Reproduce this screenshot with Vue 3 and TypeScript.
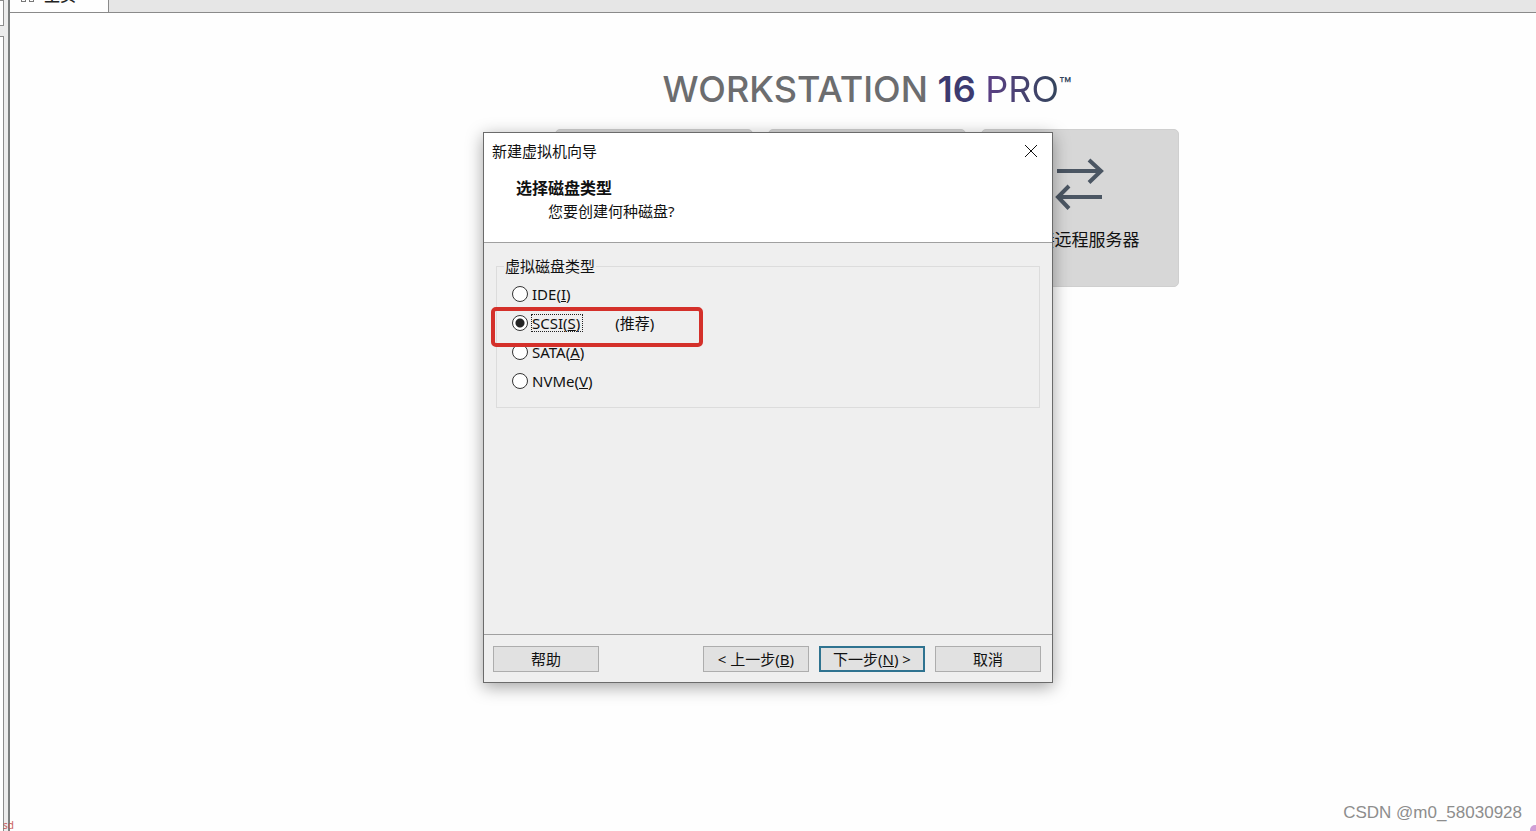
<script setup lang="ts">
import { ref } from 'vue'

interface DiskType {
  value: string
  label: string
  accessKey: string
  note?: string
}

const diskTypes: DiskType[] = [
  { value: 'ide', label: 'IDE', accessKey: 'I' },
  { value: 'scsi', label: 'SCSI', accessKey: 'S', note: '(推荐)' },
  { value: 'sata', label: 'SATA', accessKey: 'A' },
  { value: 'nvme', label: 'NVMe', accessKey: 'V' },
]

const selected = ref('scsi')
</script>

<template>
  <div class="app">
    <aside class="sidebar">
      <div class="search-pane"></div>
      <div class="tree-pane"></div>
      <span class="side-mark">sd</span>
    </aside>

    <main class="workspace">
      <nav class="tabs">
        <a class="tab" href="#home">
          <svg width="16" height="14" viewBox="0 0 16 14" fill="none" stroke="#777" aria-hidden="true">
            <rect x="1.5" y="0.5" width="4" height="4" />
            <rect x="9.5" y="0.5" width="4" height="4" />
            <rect x="1.5" y="8.5" width="4" height="4" />
            <rect x="9.5" y="8.5" width="4" height="4" />
          </svg>
          <span>主页</span>
        </a>
      </nav>

      <section class="home">
        <h1 class="brand">WORKSTATION <b>16</b> <span class="pro">PRO</span><span class="tm">™</span></h1>
        <div class="cards">
          <div class="card"></div>
          <div class="card"></div>
          <button class="card" type="button">
            <svg width="50" height="52" viewBox="0 0 50 52" fill="none" stroke="#4b5663" stroke-width="4" aria-hidden="true">
              <path d="M2 13H46M34 2L46 13L34 24.500" />
              <path d="M47 39H3M14 28L3 39L14 50.500" />
            </svg>
            <span>连接远程服务器</span>
          </button>
        </div>
      </section>
    </main>

    <div class="dialog" role="dialog" aria-labelledby="wizard-title">
      <header class="head">
        <div class="titlebar">
          <span id="wizard-title">新建虚拟机向导</span>
          <button class="close" type="button" aria-label="关闭">
            <svg width="14" height="14" viewBox="0 0 14 14" stroke="#111" aria-hidden="true">
              <path d="M1 1L13 13M13 1L1 13" />
            </svg>
          </button>
        </div>
        <h2>选择磁盘类型</h2>
        <p>您要创建何种磁盘?</p>
      </header>

      <div class="body">
        <fieldset>
          <legend>虚拟磁盘类型</legend>
          <label v-for="disk in diskTypes" :key="disk.value" class="option">
            <input v-model="selected" type="radio" name="disk" :value="disk.value" />
            <span class="name" :class="{ focused: disk.value === selected }">{{ disk.label }}(<u>{{ disk.accessKey }}</u>)</span>
            <span v-if="disk.note" class="note">{{ disk.note }}</span>
          </label>
          <div class="marker"></div>
        </fieldset>
      </div>

      <footer class="foot">
        <button type="button" class="btn help">帮助</button>
        <button type="button" class="btn">&lt; 上一步(<u>B</u>)</button>
        <button type="button" class="btn primary">下一步(<u>N</u>) &gt;</button>
        <button type="button" class="btn">取消</button>
      </footer>
    </div>

    <div class="watermark">CSDN @m0_58030928</div>
    <div class="corner"></div>
  </div>
</template>

<style>
body {
  margin: 0;
}
</style>

<style scoped>
.app {
  position: relative;
  display: flex;
  min-height: 100vh;
  overflow: hidden;
  background: #fefefe;
  color: #111;
  font: 15px/20px "Noto Sans", "Noto Sans CJK SC", sans-serif;
}

button {
  font: inherit;
  color: inherit;
}

.sidebar {
  position: relative;
  box-sizing: border-box;
  display: flex;
  flex-direction: column;
  gap: 10px;
  width: 10px;
  padding: 0 4px 0 0;
  border-right: 2px solid #7c7f7f;
  background: #ececec;
}

.search-pane,
.tree-pane {
  border: 1px solid #8c8c8c;
  border-left: 0;
  background: #fff;
}

.search-pane {
  height: 24px;
}

.tree-pane {
  flex: 1;
  border-bottom: 0;
}

.side-mark {
  position: absolute;
  left: 3px;
  bottom: 0;
  color: #c9605c;
  font-size: 10px;
  line-height: 12px;
}

.workspace {
  flex: 1;
  display: flex;
  flex-direction: column;
}

.tabs {
  display: flex;
  height: 12px;
  border-bottom: 1px solid #8a8a8a;
  background: #e6e6e6;
}

.tab {
  box-sizing: border-box;
  display: flex;
  align-items: flex-end;
  gap: 8px;
  width: 99px;
  height: 12px;
  padding: 0 0 9px 10px;
  overflow: hidden;
  border-right: 1px solid #8a8a8a;
  background: #fefefe;
  color: #222;
  text-decoration: none;
}

.tab svg,
.tab span {
  flex: none;
}

.tab span {
  font-size: 16px;
  font-weight: 500;
  line-height: 16px;
}

.home {
  display: flex;
  flex-direction: column;
  align-items: center;
  padding: 54px 0 0 188px;
}

.brand {
  margin: 0;
  color: #6c6d6f;
  font: 500 36px/44px Inter, sans-serif;
  white-space: nowrap;
}

.brand b {
  color: #3c3a70;
  font-weight: 600;
}

.pro {
  background: linear-gradient(90deg, #5c3f85, #33455c);
  background-clip: text;
  color: transparent;
  font-weight: 400;
}

.tm {
  color: #33455c;
  font-size: 20px;
  line-height: 20px;
  vertical-align: 10px;
}

.cards {
  display: flex;
  gap: 15px;
  margin-top: 18px;
}

.card {
  box-sizing: border-box;
  display: flex;
  flex-direction: column;
  align-items: center;
  gap: 18px;
  width: 198px;
  height: 158px;
  padding: 28px 0 0;
  border: 1px solid #cfcfcf;
  border-radius: 5px;
  background: #d7d7d7;
  font-size: 17px;
  line-height: 24px;
}

.dialog {
  position: absolute;
  top: 132px;
  left: 50%;
  box-sizing: border-box;
  display: flex;
  flex-direction: column;
  width: 570px;
  border: 1px solid #6b6b6b;
  background: #efefef;
  box-shadow: 0 4px 16px rgba(0, 0, 0, 0.36);
  transform: translateX(-50%);
}

.head {
  box-sizing: border-box;
  height: 110px;
  border-bottom: 1px solid #a0a0a0;
  background: #fff;
}

.titlebar {
  display: flex;
  align-items: center;
  justify-content: space-between;
  height: 36px;
  padding: 0 14px 0 8px;
}

.close {
  display: flex;
  padding: 0;
  border: 0;
  background: none;
}

.head h2 {
  margin: 9px 0 0 32px;
  font-size: 16px;
  line-height: 20px;
}

.head p {
  margin: 3px 0 0 64px;
}

.body {
  height: 391px;
  padding: 13px 12px 0;
  box-sizing: border-box;
}

fieldset {
  position: relative;
  margin: 0;
  padding: 3px 15px 12px;
  border: 1px solid #dcdcdc;
}

legend {
  margin-left: -8px;
  padding: 0 1px;
}

.option {
  display: flex;
  align-items: center;
  height: 29px;
}

input {
  appearance: none;
  box-sizing: border-box;
  width: 16px;
  height: 16px;
  margin: 0 3px 0 0;
  border: 1px solid #333;
  border-radius: 50%;
  background: #fff;
}

input:checked {
  background: radial-gradient(circle, #222 0 4px, #fff 5px);
}

.name {
  padding: 0 1px;
  line-height: 18px;
}

.focused {
  padding-right: 3px;
  outline: 1px dotted #222;
  outline-offset: -1px;
}

.note {
  margin-left: 32px;
}

.marker {
  position: absolute;
  top: 31px;
  left: -6px;
  box-sizing: border-box;
  width: 212px;
  height: 40px;
  border: 4px solid #d4302a;
  border-radius: 5px;
  pointer-events: none;
}

.foot {
  display: flex;
  gap: 10px;
  padding: 11px 11px 10px 9px;
  border-top: 1px solid #a0a0a0;
}

.btn {
  box-sizing: border-box;
  width: 106px;
  height: 26px;
  padding: 0;
  border: 1px solid #adadad;
  background: #e1e1e1;
  line-height: 20px;
  white-space: nowrap;
}

.help {
  margin-right: auto;
}

.primary {
  border: 2px solid #2f7390;
}

.watermark {
  position: absolute;
  right: 14px;
  bottom: 8px;
  color: #8d8d8d;
  font: 17px/20px "Liberation Sans", sans-serif;
}

.corner {
  position: absolute;
  right: -4px;
  bottom: -4px;
  width: 10px;
  height: 10px;
  border-radius: 50%;
  background: #cf9ed6;
}
</style>
